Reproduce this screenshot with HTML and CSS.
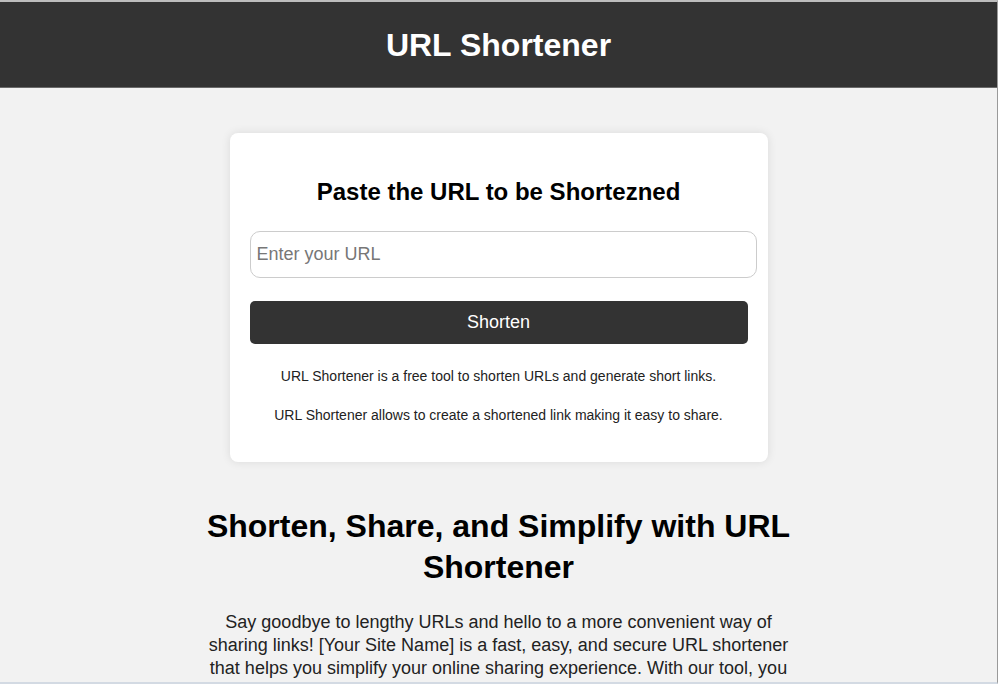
FILE: index.html
```html
<!DOCTYPE html>
<html lang="en">
<head>
<meta charset="utf-8">
<title>URL Shortener</title>
<link rel="stylesheet" href="styles.css">
</head>
<body>
<div class="frame">
  <header class="site-header">
    <h1 class="site-title">URL Shortener</h1>
  </header>
  <main class="main">
    <section class="card">
      <h2 class="card-title">Paste the URL to be Shortezned</h2>
      <input class="url-input" type="text" placeholder="Enter your URL">
      <button class="shorten-btn" type="button">Shorten</button>
      <p class="card-note first">URL Shortener is a free tool to shorten URLs and generate short links.</p>
      <p class="card-note">URL Shortener allows to create a shortened link making it easy to share.</p>
    </section>
    <section class="about">
      <h2 class="about-title">Shorten, Share, and Simplify with URL Shortener</h2>
      <p class="about-text">Say goodbye to lengthy URLs and hello to a more convenient way of sharing links! [Your Site Name] is a fast, easy, and secure URL shortener that helps you simplify your online sharing experience. With our tool, you can quickly turn long and complicated links into short ones that are easy to share.</p>
    </section>
  </main>
</div>
</body>
</html>
```
FILE: styles.css
```css
html, body {
  margin: 0;
  padding: 0;
  background: #ffffff;
  overflow: hidden;
}
body {
  font-family: "Liberation Sans", Arial, sans-serif;
}
.frame {
  width: 998px;
  height: 684px;
  box-sizing: border-box;
  border-top: 2px solid #bdbdbd;
  border-right: 1px solid #9a9a9a;
  border-bottom: 2px solid #d3dae3;
  background: #f2f2f2;
  overflow: hidden;
}
.site-header {
  height: 86px;
  background: #333333;
  display: flex;
  align-items: center;
  justify-content: center;
  box-sizing: border-box;
  padding-top: 1px;
  border-bottom: 1px solid #6a6a6a;
}
.site-title {
  margin: 0;
  color: #ffffff;
  font-size: 32px;
  font-weight: bold;
  line-height: 37px;
}
.main {
  display: flex;
  flex-direction: column;
  align-items: center;
  padding-top: 45px;
}
.card {
  width: 538px;
  box-sizing: border-box;
  padding: 20px 20px 39px;
  background: #ffffff;
  border-radius: 8px;
  box-shadow: 0 0 10px rgba(0, 0, 0, 0.1);
  text-align: center;
}
.card-title {
  margin: 25px 0 25px;
  font-size: 24px;
  line-height: 28px;
  font-weight: bold;
  color: #000000;
}
.url-input {
  display: block;
  width: 507px;
  height: 47px;
  box-sizing: border-box;
  margin: 0;
  padding: 0 6px;
  border: 1px solid #cccccc;
  border-radius: 10px;
  font-family: "Liberation Sans", Arial, sans-serif;
  font-size: 18px;
  color: #333;
  background: #fff;
  outline: none;
}
.url-input::placeholder {
  color: #777777;
}
.shorten-btn {
  display: block;
  width: 100%;
  height: 43px;
  margin: 23px 0 0;
  padding: 0;
  border: none;
  border-radius: 5px;
  background: #333333;
  color: #ffffff;
  font-family: "Liberation Sans", Arial, sans-serif;
  font-size: 18px;
}
.card-note {
  margin: 0;
  font-size: 14px;
  line-height: 16px;
  color: #222222;
}
.card-note.first {
  margin-top: 24px;
  margin-bottom: 23px;
}
.about {
  width: 600px;
  text-align: center;
  margin-top: 44px;
}
.about-title {
  margin: 0;
  font-size: 32px;
  line-height: 41px;
  font-weight: bold;
  color: #000000;
}
.about-text {
  margin: 23px 0 0;
  font-size: 18px;
  line-height: 23px;
  color: #222222;
}
```
